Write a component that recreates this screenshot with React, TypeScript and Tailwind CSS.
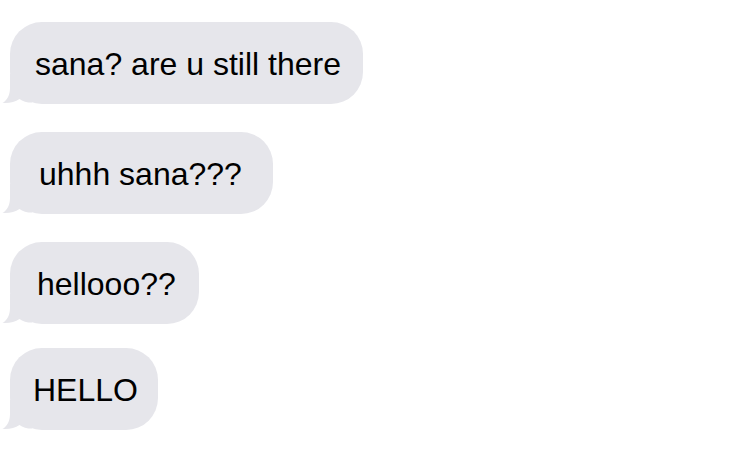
const messages = [
  { text: "sana? are u still there", width: "w-[353px]", pad: "pl-[25px]" },
  { text: "uhhh sana???", width: "w-[263px]", pad: "pl-[29px]" },
  { text: "hellooo??", width: "w-[189px]", pad: "pl-[27px]" },
  { text: "HELLO", width: "w-[148px]", pad: "pl-[23px]" },
];

function Tail() {
  return (
    <svg
      className="absolute left-[-8px] bottom-0 h-[30px] w-[30px]"
      viewBox="0 0 30 30"
      aria-hidden
    >
      <path
        d="M8 0 L8 14 C8 21 5 26.5 0.5 29 C7 29.6 13 28 17.5 25 C20.5 27.5 25 28.6 30 28.6 L30 0 Z"
        fill="#e6e6eb"
      />
    </svg>
  );
}

function Bubble({ text, width, pad }: { text: string; width: string; pad: string }) {
  return (
    <div
      className={`relative flex h-[82px] items-center rounded-[32px] bg-[#e6e6eb] ${width} ${pad}`}
    >
      <Tail />
      <span className="relative pt-[2px] text-[32px] leading-none text-black">{text}</span>
    </div>
  );
}

export default function App() {
  return (
    <div
      className="h-[458px] w-[750px] overflow-hidden bg-white pl-[10px] pt-[22px]"
      style={{ fontFamily: '"Liberation Sans", Arial, sans-serif' }}
    >
      <div className="flex flex-col gap-[28px]">
        <Bubble {...messages[0]} />
        <Bubble {...messages[1]} />
        <div className="flex flex-col gap-[24px]">
          <Bubble {...messages[2]} />
          <Bubble {...messages[3]} />
        </div>
      </div>
    </div>
  );
}
